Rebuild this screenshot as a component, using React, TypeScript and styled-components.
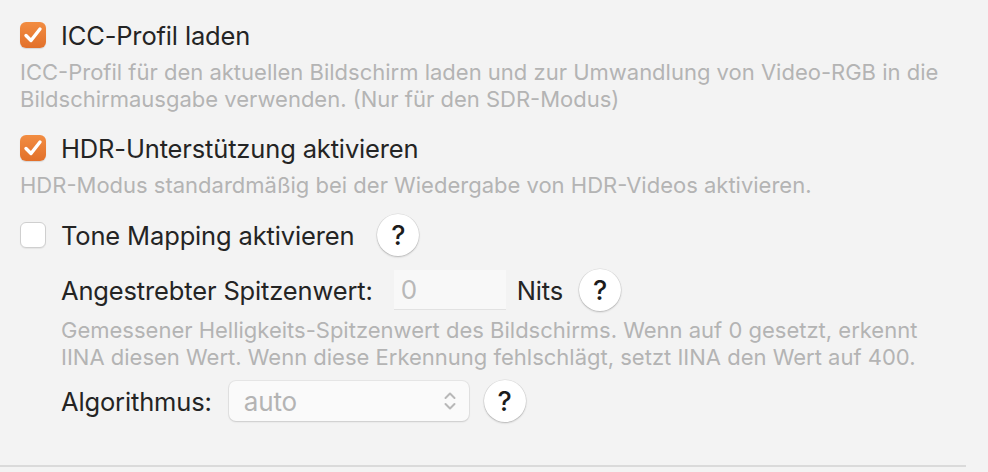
import styled, { createGlobalStyle } from "styled-components";

const GlobalStyle = createGlobalStyle`
  body {
    margin: 0;
    background: #f3f3f3;
    font-family: Inter, "Noto Sans", sans-serif;
    color: #242424;
  }
`;

const Page = styled.div`
  width: 988px;
  height: 472px;
  display: flex;
  flex-direction: column;
  box-sizing: border-box;
  padding: 20px 0 0 20px;
  overflow: hidden;
`;

const Options = styled.div`
  flex: 1;
  display: flex;
  flex-direction: column;
`;

const Divider = styled.div`
  width: 966px;
  height: 2px;
  background: #dadada;
  margin-left: -20px;
  margin-bottom: 5px;
`;

const CheckRow = styled.label<{ gap?: number }>`
  display: flex;
  align-items: center;
  gap: 15px;
  height: 30px;
  margin-top: ${(p) => p.gap ?? 0}px;
  font-size: 25.5px;
  letter-spacing: -0.15px;
`;

const Box = styled.span<{ checked: boolean }>`
  width: 26px;
  height: 26px;
  flex-shrink: 0;
  box-sizing: border-box;
  border-radius: 6px;
  display: flex;
  align-items: center;
  justify-content: center;
  background: ${(p) =>
    p.checked ? "linear-gradient(#f28d42, #e2702a)" : "#ffffff"};
  border: ${(p) => (p.checked ? "none" : "1px solid #cfcfcf")};
  box-shadow: ${(p) =>
    p.checked ? "0 1px 1px rgba(0,0,0,0.12)" : "0 1px 1px rgba(0,0,0,0.06)"};
`;

const Hint = styled.p<{ top?: number }>`
  margin: ${(p) => p.top ?? 9}px 0 0 0;
  font-size: 22px;
  line-height: 27px;
  color: #b4b4b4;
  white-space: nowrap;
`;

const Indented = styled.div`
  display: flex;
  flex-direction: column;
  padding-left: 41px;
`;

const FieldRow = styled.div<{ gap?: number }>`
  display: flex;
  align-items: center;
  height: 44px;
  margin-top: ${(p) => p.gap ?? 0}px;
  font-size: 25.5px;
  letter-spacing: -0.15px;
`;

const FieldLabel = styled.span<{ space: number }>`
  margin-right: ${(p) => p.space}px;
`;

const NumberField = styled.div`
  width: 112px;
  height: 40px;
  box-sizing: border-box;
  background: #f8f8f8;
  border-bottom: 1px solid #e2e2e2;
  display: flex;
  align-items: center;
  padding-left: 7px;
  color: #b8b8b8;
  font-size: 26px;
  margin-right: 11px;
`;

const Popup = styled.div`
  width: 240px;
  height: 40px;
  box-sizing: border-box;
  border-radius: 7px;
  background: #fafafa;
  box-shadow: 0 0 0 1px rgba(0, 0, 0, 0.05), 0 1px 2px rgba(0, 0, 0, 0.12);
  display: flex;
  align-items: center;
  justify-content: space-between;
  padding: 0 12px 0 15px;
  color: #b4b4b4;
  font-size: 26px;
  margin-right: 15px;
`;

const Help = styled.span<{ left?: number }>`
  width: 42px;
  height: 42px;
  flex-shrink: 0;
  border-radius: 50%;
  background: #ffffff;
  box-shadow: 0 0 0 0.5px rgba(0, 0, 0, 0.1), 0 1px 2px rgba(0, 0, 0, 0.22);
  display: flex;
  align-items: center;
  justify-content: center;
  font-size: 27px;
  font-weight: 500;
  letter-spacing: 0;
  color: #1c1c1c;
  margin-left: ${(p) => p.left ?? 0}px;
`;

const Check = () => (
  <svg width="20" height="18" viewBox="0 0 20 18">
    <path
      d="M3 9.5 L8 14.5 L17 3"
      fill="none"
      stroke="#fff"
      strokeWidth="3.4"
      strokeLinecap="round"
      strokeLinejoin="round"
    />
  </svg>
);

const Chevrons = () => (
  <svg width="14" height="22" viewBox="0 0 14 22">
    <path
      d="M2.5 8 L7 3.5 L11.5 8 M2.5 14 L7 18.5 L11.5 14"
      fill="none"
      stroke="#b8b8b8"
      strokeWidth="2"
      strokeLinecap="round"
      strokeLinejoin="round"
    />
  </svg>
);

export default function App() {
  return (
    <>
      <GlobalStyle />
      <Page>
        <Options>
          <CheckRow>
            <Box checked>
              <Check />
            </Box>
            ICC-Profil laden
          </CheckRow>
          <Hint>
            ICC-Profil für den aktuellen Bildschirm laden und zur Umwandlung von
            Video-RGB in die
            <br />
            Bildschirmausgabe verwenden. (Nur für den SDR-Modus)
          </Hint>
          <CheckRow gap={20}>
            <Box checked>
              <Check />
            </Box>
            HDR-Unterstützung aktivieren
          </CheckRow>
          <Hint>
            HDR-Modus standardmäßig bei der Wiedergabe von HDR-Videos
            aktivieren.
          </Hint>
          <CheckRow gap={21}>
            <Box checked={false} />
            Tone Mapping aktivieren
            <Help left={8}>?</Help>
          </CheckRow>
          <Indented>
            <FieldRow gap={18}>
              <FieldLabel space={21}>Angestrebter Spitzenwert:</FieldLabel>
              <NumberField>0</NumberField>
              Nits
              <Help left={16}>?</Help>
            </FieldRow>
            <Hint top={5}>
              Gemessener Helligkeits-Spitzenwert des Bildschirms. Wenn auf 0
              gesetzt, erkennt
              <br />
              IINA diesen Wert. Wenn diese Erkennung fehlschlägt, setzt IINA den
              Wert auf 400.
            </Hint>
            <FieldRow gap={8}>
              <FieldLabel space={17}>Algorithmus:</FieldLabel>
              <Popup>
                auto
                <Chevrons />
              </Popup>
              <Help>?</Help>
            </FieldRow>
          </Indented>
        </Options>
        <Divider />
      </Page>
    </>
  );
}
